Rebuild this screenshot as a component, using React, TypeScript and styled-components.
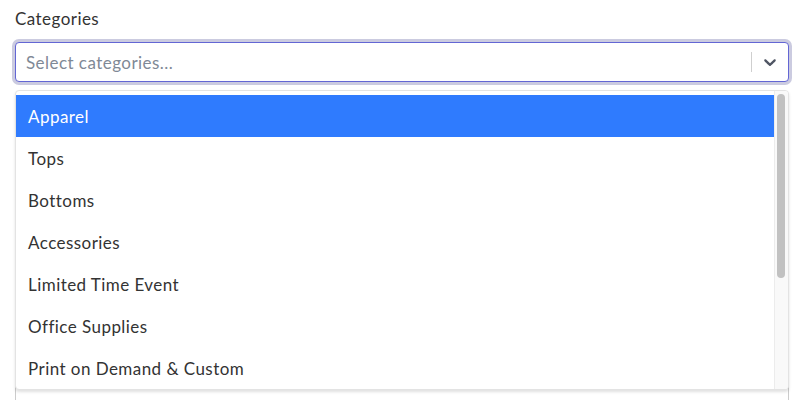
import React from "react";
import styled, { createGlobalStyle } from "styled-components";

const Global = createGlobalStyle`
  html, body { margin: 0; padding: 0; background: #fff; }
  *, *::before, *::after { box-sizing: border-box; }
  body { font-family: "Lato", "Noto Sans", sans-serif; color: #333; overflow: hidden; }
`;

const Page = styled.div`
  padding: 8px 11px 0 15px;
  display: flex;
  flex-direction: column;
`;

const Field = styled.div`
  position: relative;
  display: flex;
  flex-direction: column;
`;

const Label = styled.label`
  font-size: 17px;
  line-height: 22px;
  color: #333;
  margin-bottom: 12px;
  letter-spacing: 0.45px;
`;

const Control = styled.div`
  display: flex;
  align-items: center;
  height: 40px;
  border: 1px solid #6366d4;
  border-radius: 4px;
  box-shadow: 0 0 0 3px #cbcbe0;
  background: #fff;
`;

const ValueArea = styled.div`
  flex: 1;
  padding: 0 10px;
  font-size: 17px;
  color: #7f8996;
  letter-spacing: 0.45px;
`;

const Indicators = styled.div`
  display: flex;
  align-items: center;
  align-self: stretch;
`;

const Separator = styled.span`
  width: 1px;
  align-self: stretch;
  margin: 9px 0;
  background: #cfcfcf;
`;

const Chevron = styled.div`
  display: flex;
  padding: 8px;
  color: #4f5563;
`;

const Menu = styled.div`
  position: absolute;
  top: 82px;
  left: 0;
  right: 0;
  height: 300px;
  z-index: 2;
  display: flex;
  background: #fff;
  border: 1px solid #e3e3e3;
  border-radius: 4px;
  box-shadow: 0 2px 3px rgba(0, 0, 0, 0.12);
  overflow: hidden;
`;

const List = styled.div`
  flex: 1;
  padding: 4px 0;
`;

const Track = styled.div`
  width: 14px;
  background: #f9f9f9;
  border-left: 1px solid #ececec;
  padding: 3px 3px 0 2px;
`;

const Thumb = styled.div`
  height: 184px;
  border-radius: 5px;
  background: #c1c1c1;
`;

const Option = styled.div<{ $active?: boolean }>`
  height: 42px;
  display: flex;
  align-items: center;
  padding: 1px 12px 0;
  font-size: 17px;
  letter-spacing: 0.45px;
  color: ${(p) => (p.$active ? "#fff" : "#333")};
  background: ${(p) => (p.$active ? "#2f7bfe" : "transparent")};
`;

const NextBox = styled.div`
  margin-top: 10px;
  height: 380px;
  border: 1px solid #cccccc;
  border-radius: 4px;
`;

const options = [
  "Apparel",
  "Tops",
  "Bottoms",
  "Accessories",
  "Limited Time Event",
  "Office Supplies",
  "Print on Demand & Custom",
];

export default function App() {
  return (
    <>
      <Global />
      <Page>
        <Field>
          <Label>Categories</Label>
          <Control>
            <ValueArea>Select categories...</ValueArea>
            <Indicators>
              <Separator />
              <Chevron>
                <svg width="20" height="20" viewBox="0 0 20 20" fill="currentColor">
                  <path d="M4.516 7.548c0.436-0.446 1.043-0.481 1.576 0l3.908 3.747 3.908-3.747c0.533-0.481 1.141-0.446 1.574 0 0.436 0.445 0.408 1.197 0 1.615-0.406 0.418-4.695 4.502-4.695 4.502-0.217 0.223-0.502 0.335-0.787 0.335s-0.57-0.112-0.789-0.335c0 0-4.287-4.084-4.695-4.502s-0.436-1.17 0-1.615z" />
                </svg>
              </Chevron>
            </Indicators>
          </Control>
          <Menu>
            <List>
              {options.map((o, i) => (
                <Option key={o} $active={i === 0}>
                  {o}
                </Option>
              ))}
            </List>
            <Track>
              <Thumb />
            </Track>
          </Menu>
        </Field>
        <NextBox />
      </Page>
    </>
  );
}
